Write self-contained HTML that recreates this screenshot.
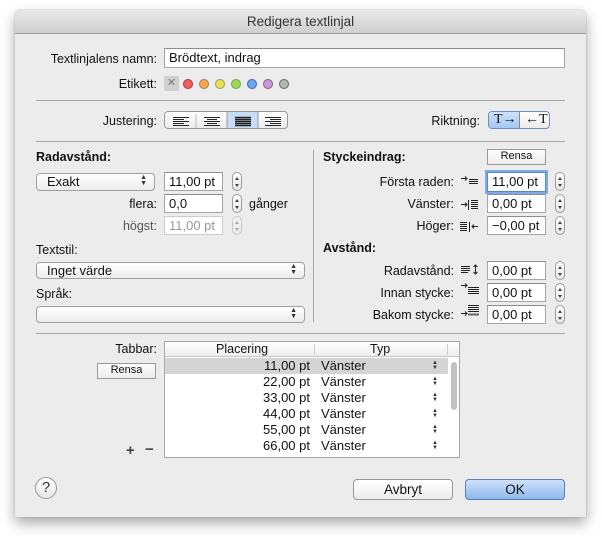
<!DOCTYPE html>
<html><head><meta charset="utf-8"><style>
*{box-sizing:border-box;margin:0;padding:0}
body{width:602px;height:540px;background:#fff;position:relative;overflow:hidden;font-family:"Liberation Sans",sans-serif;font-size:12.5px;color:#111}
.win{position:absolute;left:15px;top:10px;width:571px;height:507px;background:#ececec;border-radius:5px 5px 0 0;box-shadow:0 6px 14px rgba(0,0,0,.35),0 0 1px rgba(0,0,0,.4)}
.tb{position:absolute;left:15px;top:10px;width:571px;height:24px;background:linear-gradient(#e9e9e9,#cfcfcf);border-bottom:1px solid #999;border-radius:5px 5px 0 0;text-align:center;line-height:23px;font-size:13.5px;color:#333}
.a{position:absolute;white-space:nowrap}
.r{text-align:right}
.inp{position:absolute;background:#fff;border:1px solid #a5a5a5;border-top-color:#8c8c8c;padding-left:4px;line-height:17px;font-size:13px}
.hr{position:absolute;height:1px;background:#a8a8a8}
.b{font-weight:bold}
.pop{position:absolute;border:1px solid #a0a0a0;border-radius:4px;background:linear-gradient(#fff,#ececec);padding-left:10px;line-height:16px;font-size:13px}
.pop:after{content:"";position:absolute;right:8px;top:4px;width:5px;height:8px;background:linear-gradient(#444,#444) 0 0/0 0;}
.ar{position:absolute;right:7px;top:1px;font-size:7px;line-height:6px;color:#333}
.st{position:absolute;width:10px;height:19px;border:1px solid #9a9a9a;border-radius:5px;background:linear-gradient(#fff,#e8e8e8)}
.st:before{content:"";position:absolute;left:2px;top:4px;border:2px solid transparent;border-bottom:3px solid #444;border-top:0}
.st:after{content:"";position:absolute;left:2px;top:11px;border:2px solid transparent;border-top:3px solid #444;border-bottom:0}
.btn{position:absolute;border:1px solid #9a9a9a;background:linear-gradient(#fdfdfd,#ececec);text-align:center;font-size:11px;line-height:13px}
.dot{position:absolute;width:10px;height:10px;border-radius:50%;top:79px}
.seg{position:absolute;border:1px solid #989898;border-radius:4px;background:linear-gradient(#fff,#ebebeb);overflow:hidden}
.row{position:absolute;left:166px;width:282px;height:16px;line-height:16px;font-size:13px}
</style></head><body>
<div class="win"></div>
<div class="tb">Redigera textlinjal</div>

<div class="a r" style="right:445px;top:52px">Textlinjalens namn:</div>
<div class="inp" style="left:164px;top:48px;width:401px;height:20px">Brödtext, indrag</div>
<div class="a r" style="right:445px;top:77px">Etikett:</div>
<div class="a" style="left:164px;top:76px;width:15px;height:15px;background:#d0d0d0;border-radius:2px;color:#777;font-size:11px;text-align:center;line-height:15px">✕</div>
<div class="dot" style="left:183px;background:#f15e5e;border:1px solid #a33"></div>
<div class="dot" style="left:199px;background:#f7a94a;border:1px solid #a76"></div>
<div class="dot" style="left:215px;background:#e6e24c;border:1px solid #996"></div>
<div class="dot" style="left:231px;background:#a3d55a;border:1px solid #6a4"></div>
<div class="dot" style="left:247px;background:#6aa6f4;border:1px solid #46a"></div>
<div class="dot" style="left:263px;background:#c79ad8;border:1px solid #858"></div>
<div class="dot" style="left:279px;background:#b4b4b4;border:1px solid #666"></div>
<div class="hr" style="left:36px;top:100px;width:529px"></div>

<div class="a r" style="right:445px;top:114px">Justering:</div>
<div class="seg" style="left:164px;top:111px;width:124px;height:18px">
 <svg width="124" height="18" style="position:absolute;left:0;top:0">
 <rect x="62" y="0" width="31" height="18" fill="#c6dcf6"/>
 <line x1="31" y1="2" x2="31" y2="16" stroke="#bbb"/><line x1="62" y1="0" x2="62" y2="18" stroke="#999"/><line x1="93" y1="0" x2="93" y2="18" stroke="#999"/>
 <g stroke="#222" stroke-width="1">
 <path d="M8 5.5h16M8 7.5h11M8 9.5h16M8 11.5h11M8 13.5h16"/>
 <path d="M39 5.5h16M42 7.5h10M39 9.5h16M42 11.5h10M39 13.5h16"/>
 <path d="M70 5.5h16M70 7.5h16M70 9.5h16M70 11.5h16M70 13.5h16" stroke-width="1.4"/>
 <path d="M100 5.5h16M105 7.5h11M100 9.5h16M105 11.5h11M100 13.5h16"/>
 </g></svg></div>
<div class="a r" style="right:122px;top:114px">Riktning:</div>
<div class="seg" style="left:488px;top:111px;width:62px;height:18px;border-color:#6f8fbf">
 <div style="position:absolute;left:0;top:0;width:31px;height:18px;background:linear-gradient(#cfe2fb,#9fc3f1);border-right:1px solid #888"></div>
 <div class="a" style="left:5px;top:0;font-family:'Liberation Serif',serif;font-size:14px">T→</div>
 <div class="a" style="left:36px;top:0;font-family:'Liberation Serif',serif;font-size:14px">←T</div>
</div>
<div class="hr" style="left:36px;top:141px;width:529px"></div>

<div class="a b" style="left:36px;top:150px">Radavstånd:</div>
<div class="pop" style="left:36px;top:173px;width:119px;height:18px">Exakt<span class="ar">▲<br>▼</span></div>
<div class="inp" style="left:164px;top:172px;width:59px;height:19px">11,00 pt</div>
<div class="st" style="left:232px;top:172px"></div>
<div class="a r" style="right:445px;top:197px">flera:</div>
<div class="inp" style="left:164px;top:194px;width:59px;height:19px">0,0</div>
<div class="st" style="left:232px;top:194px"></div>
<div class="a" style="left:249px;top:197px">gånger</div>
<div class="a r" style="right:445px;top:219px;color:#555">högst:</div>
<div class="inp" style="left:164px;top:216px;width:59px;height:19px;color:#999;border-color:#ccc">11,00 pt</div>
<div class="st" style="left:232px;top:216px;opacity:.4"></div>
<div class="a" style="left:36px;top:243px">Textstil:</div>
<div class="pop" style="left:36px;top:262px;width:269px;height:17px">Inget värde<span class="ar">▲<br>▼</span></div>
<div class="a" style="left:36px;top:287px">Språk:</div>
<div class="pop" style="left:36px;top:306px;width:269px;height:17px"><span class="ar">▲<br>▼</span></div>
<div style="position:absolute;left:313px;top:150px;width:1px;height:172px;background:#a8a8a8"></div>

<div class="a b" style="left:323px;top:150px">Styckeindrag:</div>
<div class="btn" style="left:487px;top:149px;width:59px;height:16px">Rensa</div>
<div class="a r" style="right:148px;top:175px">Första raden:</div>
<div class="a r" style="right:148px;top:197px">Vänster:</div>
<div class="a r" style="right:148px;top:219px">Höger:</div>
<div class="a b" style="left:323px;top:241px">Avstånd:</div>
<div class="a r" style="right:148px;top:264px">Radavstånd:</div>
<div class="a r" style="right:148px;top:286px">Innan stycke:</div>
<div class="a r" style="right:148px;top:308px">Bakom stycke:</div>
<svg width="30" height="180" style="position:absolute;left:458px;top:170px" stroke="#222" fill="none" stroke-width="1">
 <path d="M3 8.5h6M7 6.5l2 2-2 2M11 9.5h9M11 11.5h9M11 13.5h9M11 7.5h0"/>
 <path d="M3 34.5h6M7 32.5l2 2-2 2M10.5 30v10M13 30.5h7M13 32.5h7M13 34.5h7M13 36.5h7M13 38.5h7"/>
 <path d="M2 52.5h7M2 54.5h7M2 56.5h7M2 58.5h7M2 60.5h7M11.5 52v10M14 56.5h6M16 54.5l-2 2 2 2"/>
 <path d="M3 96.5h9M3 98.5h9M3 100.5h9M3 102.5h7M17.5 95v9M15.5 97l2-2 2 2M15.5 102l2 2 2-2"/>
 <path d="M3 115.5h6M7 113.5l2 2-2 2M10 117.5h11M10 119.5h11M10 121.5h11M10 123.5h11"/>
 <path d="M3 143.5h6M7 141.5l2 2-2 2M10 135.5h11M10 137.5h11M10 139.5h11M10 141.5h11" />
 <path d="M10 144h11M10 145h11" stroke="#666"/>
</svg>
<div class="inp" style="left:487px;top:172px;width:59px;height:20px;box-shadow:0 0 0 2px #7eaae6;border-color:#5a86c8">11,00 pt</div>
<div class="inp" style="left:487px;top:194px;width:59px;height:19px">0,00 pt</div>
<div class="inp" style="left:487px;top:216px;width:59px;height:19px">−0,00 pt</div>
<div class="inp" style="left:487px;top:261px;width:59px;height:19px">0,00 pt</div>
<div class="inp" style="left:487px;top:283px;width:59px;height:19px">0,00 pt</div>
<div class="inp" style="left:487px;top:305px;width:59px;height:19px">0,00 pt</div>
<div class="st" style="left:555px;top:172px"></div>
<div class="st" style="left:555px;top:194px"></div>
<div class="st" style="left:555px;top:216px"></div>
<div class="st" style="left:555px;top:261px"></div>
<div class="st" style="left:555px;top:283px"></div>
<div class="st" style="left:555px;top:305px"></div>
<div class="hr" style="left:36px;top:333px;width:529px"></div>

<div class="a r" style="right:445px;top:342px">Tabbar:</div>
<div class="btn" style="left:97px;top:363px;width:59px;height:16px">Rensa</div>
<div class="a b" style="left:126px;top:442px;font-size:15px;color:#444">+</div>
<div class="a b" style="left:145px;top:441px;font-size:15px;color:#444">−</div>
<div style="position:absolute;left:164px;top:341px;width:296px;height:117px;background:#fff;border:1px solid #a8a8a8;overflow:hidden">
 <div style="position:absolute;left:0;top:0;width:294px;height:15px;background:linear-gradient(#fff,#eee);border-bottom:1px solid #c8c8c8;font-size:12.5px;line-height:15px">
  <span class="a" style="left:51px">Placering</span><span class="a" style="left:205px">Typ</span>
  <span style="position:absolute;left:149px;top:2px;width:1px;height:11px;background:#ccc"></span>
  <span style="position:absolute;left:282px;top:2px;width:1px;height:11px;background:#ccc"></span>
 </div>
 <div style="position:absolute;left:0;top:16px;width:283px;height:16px;background:#d4d4d4"></div>
 <div style="position:absolute;left:286px;top:20px;width:6px;height:48px;border-radius:3px;background:#c2c2c2"></div>
</div>
<div class="row" style="top:358px"><span class="a r" style="right:138px">11,00 pt</span><span class="a" style="left:155px">Vänster</span><span class="ar" style="right:10px;top:3px;font-size:6px;line-height:5px">▲<br>▼</span></div>
<div class="row" style="top:374px"><span class="a r" style="right:138px">22,00 pt</span><span class="a" style="left:155px">Vänster</span><span class="ar" style="right:10px;top:3px;font-size:6px;line-height:5px">▲<br>▼</span></div>
<div class="row" style="top:390px"><span class="a r" style="right:138px">33,00 pt</span><span class="a" style="left:155px">Vänster</span><span class="ar" style="right:10px;top:3px;font-size:6px;line-height:5px">▲<br>▼</span></div>
<div class="row" style="top:406px"><span class="a r" style="right:138px">44,00 pt</span><span class="a" style="left:155px">Vänster</span><span class="ar" style="right:10px;top:3px;font-size:6px;line-height:5px">▲<br>▼</span></div>
<div class="row" style="top:422px"><span class="a r" style="right:138px">55,00 pt</span><span class="a" style="left:155px">Vänster</span><span class="ar" style="right:10px;top:3px;font-size:6px;line-height:5px">▲<br>▼</span></div>
<div class="row" style="top:438px"><span class="a r" style="right:138px">66,00 pt</span><span class="a" style="left:155px">Vänster</span><span class="ar" style="right:10px;top:3px;font-size:6px;line-height:5px">▲<br>▼</span></div>

<div class="a" style="left:35px;top:477px;width:22px;height:22px;border-radius:50%;border:1px solid #999;background:linear-gradient(#fff,#e6e6e6);text-align:center;line-height:20px;font-size:15px;color:#333">?</div>
<div class="a" style="left:353px;top:479px;width:100px;height:21px;border:1px solid #999;border-radius:4px;background:linear-gradient(#fff,#ececec);text-align:center;line-height:19px;font-size:13.5px">Avbryt</div>
<div class="a" style="left:465px;top:479px;width:100px;height:21px;border:1px solid #5d7fb8;border-radius:4px;background:linear-gradient(#cfe1fa,#8db8ec);text-align:center;line-height:19px;font-size:13.5px">OK</div>
</body></html>
